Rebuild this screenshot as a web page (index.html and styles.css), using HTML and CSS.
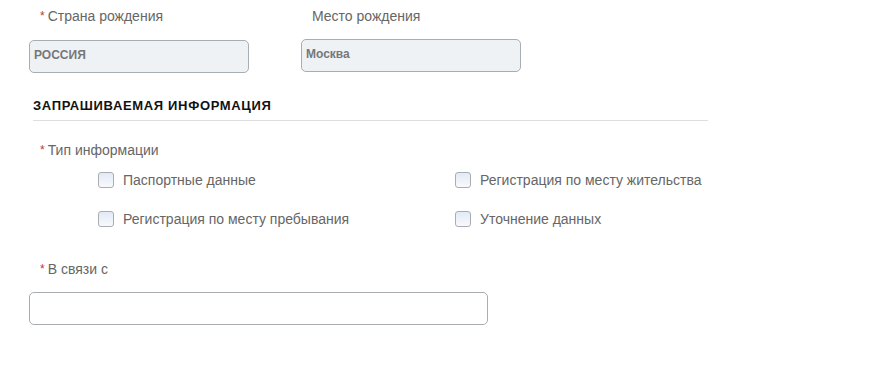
FILE: index.html
```html
<!DOCTYPE html>
<html lang="ru">
<head>
<meta charset="utf-8">
<link rel="stylesheet" href="styles.css">
</head>
<body>
<div class="form">
  <div class="row-top">
    <div class="field">
      <div class="label"><span class="req">*</span>Страна рождения</div>
      <div class="input ro">РОССИЯ</div>
    </div>
    <div class="field">
      <div class="label">Место рождения</div>
      <div class="input ro">Москва</div>
    </div>
  </div>
  <div class="section">ЗАПРАШИВАЕМАЯ ИНФОРМАЦИЯ</div>
  <div class="label lab-type"><span class="req">*</span>Тип информации</div>
  <div class="checks">
    <label class="check"><span class="box"></span>Паспортные данные</label>
    <label class="check"><span class="box"></span>Регистрация по месту жительства</label>
    <label class="check"><span class="box"></span>Регистрация по месту пребывания</label>
    <label class="check"><span class="box"></span>Уточнение данных</label>
  </div>
  <div class="label lab-reason"><span class="req">*</span>В связи с</div>
  <div class="input wide"></div>
</div>
</body>
</html>
```
FILE: styles.css
```css
html, body { margin: 0; padding: 0; background: #fff; }
body { font-family: Arial, "Liberation Sans", sans-serif; color: #666; }
.form { padding: 7px 0 0 29px; }
.row-top { display: flex; gap: 52px; }
.field { width: 220px; display: flex; flex-direction: column; }
.label { font-size: 14px; line-height: 18px; color: #666; padding-left: 11px; }
.field .label { margin-bottom: 14px; }
.req { color: #c0392b; font-size: 12px; margin-right: 3px; position: relative; top: -1px; }
.input { box-sizing: border-box; height: 33px; border: 1px solid #a8adb3; border-radius: 5px; background: #fff; }
.input.ro { background: #eff2f5; font-size: 12px; font-weight: bold; color: #777; padding: 0 4px; line-height: 29px; }
.section { margin: 25px 0 0 4px; width: 675px; font-size: 13px; font-weight: bold; color: #111; letter-spacing: 0.65px; padding-bottom: 6px; border-bottom: 1px solid #dcdfe2; line-height: 16px; }
.lab-type { margin-top: 20px; }
.checks { display: grid; grid-template-columns: 357px auto; row-gap: 21px; margin: 11px 0 0 69px; }
.check { display: flex; align-items: center; font-size: 14px; line-height: 18px; color: #666; }
.box { box-sizing: border-box; width: 16px; height: 16px; border: 1px solid #a9adb2; border-radius: 3px; background: linear-gradient(#e3eaf6, #f7f9fc); margin-right: 9px; }
.lab-reason { margin-top: 32px; }
.input.wide { width: 459px; margin-top: 13px; }
```
